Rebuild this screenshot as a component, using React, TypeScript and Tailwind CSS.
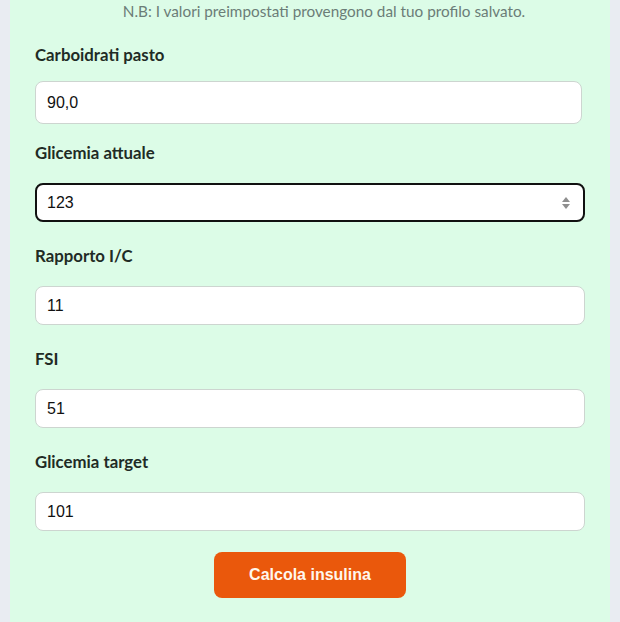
import { useState } from "react";

type Field = {
  label: string;
  value: string;
  labelClass: string;
  inputClass: string;
  focused?: boolean;
};

const FIELDS: Field[] = [
  { label: "Carboidrati pasto", value: "90,0", labelClass: "mt-6", inputClass: "mt-4 h-[43px] w-[547px]" },
  { label: "Glicemia attuale", value: "123", labelClass: "mt-[19px]", inputClass: "mt-5 h-[39px] w-[550px]", focused: true },
  { label: "Rapporto I/C", value: "11", labelClass: "mt-6", inputClass: "mt-5 h-[39px] w-[550px]" },
  { label: "FSI", value: "51", labelClass: "mt-6", inputClass: "mt-5 h-[39px] w-[550px]" },
  { label: "Glicemia target", value: "101", labelClass: "mt-6", inputClass: "mt-5 h-[39px] w-[550px]" },
];

// Spinner arrows that Chrome paints on a focused number input
function Spinner() {
  return (
    <svg width="10" height="14" viewBox="0 0 10 14" className="absolute right-[14px] top-1/2 -translate-y-1/2">
      <path d="M5 1 L9 6 L1 6 Z" fill="#8f8f8f" />
      <path d="M5 13 L9 8 L1 8 Z" fill="#8f8f8f" />
    </svg>
  );
}

export default function App() {
  const [values, setValues] = useState(FIELDS.map((f) => f.value));

  return (
    <div className="flex h-[622px] w-[620px] overflow-hidden bg-[#e9ecf2] px-[10px]">
      <div className="flex h-full w-full flex-col bg-[#dcfce7] pl-[25px] font-['Lato',sans-serif]">
        <p className="mt-[1px] pl-[3px] text-center text-[15.3px] leading-5 text-[#6b7d77]">
          N.B: I valori preimpostati provengono dal tuo profilo salvato.
        </p>

        {FIELDS.map((field, i) => (
          <div key={field.label} className="flex flex-col">
            <label className={`${field.labelClass} text-[16.8px] font-bold leading-5 text-[#1f2b25]`}>
              {field.label}
            </label>
            <div className={`relative ${field.inputClass}`}>
              <input
                type="text"
                value={values[i]}
                onChange={(e) => setValues(values.map((v, j) => (j === i ? e.target.value : v)))}
                className={`h-full w-full rounded-lg bg-white font-['Liberation_Sans',Arial,sans-serif] text-base text-[#111] outline-none ${
                  field.focused ? "border-2 border-[#111] pl-[10px]" : "border border-[#cdd5d0] pl-[11px]"
                }`}
              />
              {field.focused && <Spinner />}
            </div>
          </div>
        ))}

        <button
          type="button"
          className="mt-[21px] ml-[179px] h-[46px] w-[192px] rounded-lg bg-[#ea580c] font-['Liberation_Sans',Arial,sans-serif] text-base font-bold text-[#fff7ed]"
        >
          Calcola insulina
        </button>
      </div>
    </div>
  );
}
